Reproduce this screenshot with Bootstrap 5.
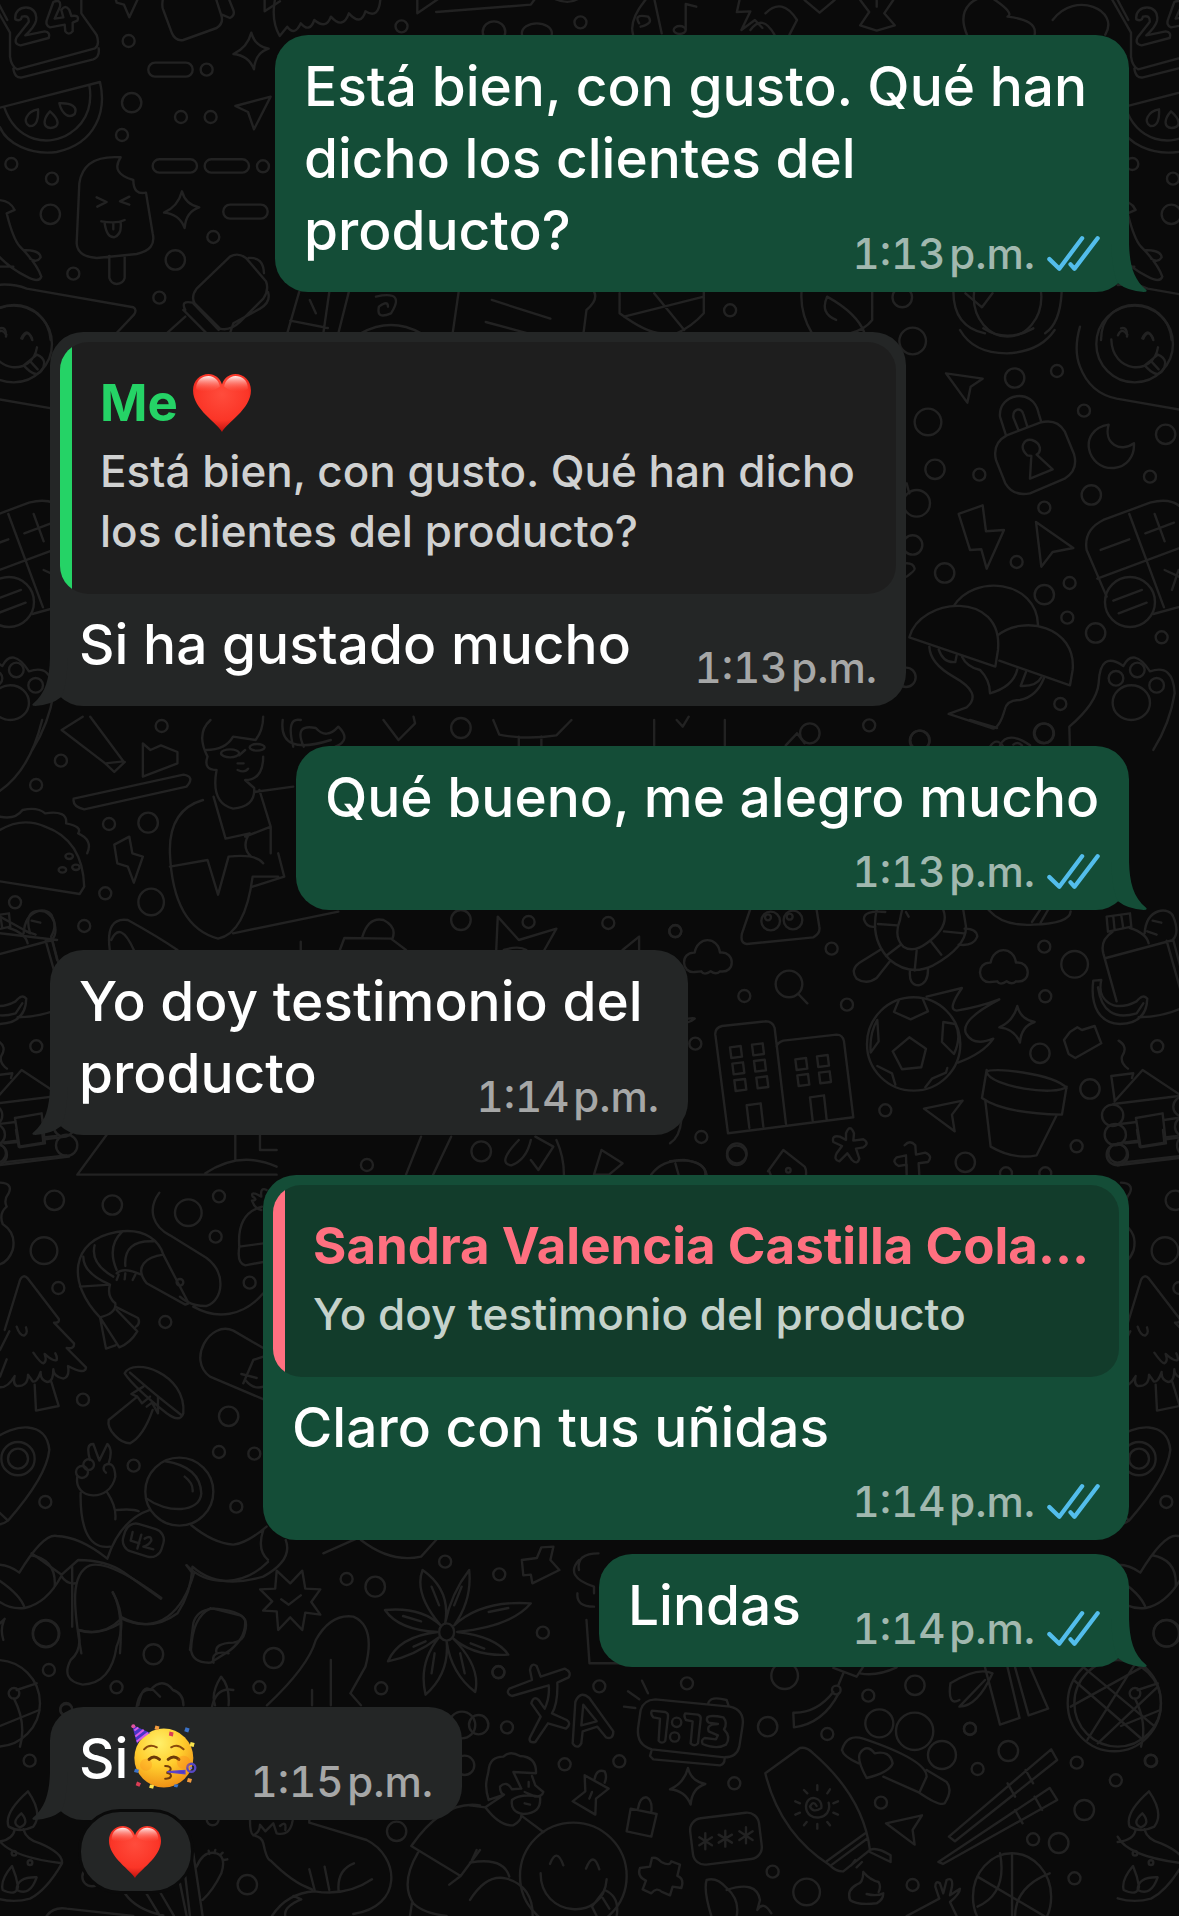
<!DOCTYPE html>
<html lang="es">
<head>
<meta charset="utf-8">
<meta name="viewport" content="width=device-width, initial-scale=1">
<title>Chat</title>
<link href="https://cdn.jsdelivr.net/npm/bootstrap@5.3.0/dist/css/bootstrap.min.css" rel="stylesheet">
<style>
  body { background: #0a0a0a; color: #fff; font-family: Inter, "Noto Sans", sans-serif; }
  .chat { min-height: 1916px; padding: 35px 50px 24px; gap: 40px; isolation: isolate; }
  .close-set { gap: 14px; }
  .wallpaper { z-index: -1; inset: 0; fill: none; stroke: #222; stroke-width: 2.4; stroke-linecap: round; stroke-linejoin: round; }
  .wallpaper * { vector-effect: non-scaling-stroke; }
  .wallpaper .cover { fill: #0a0a0a; }
  .bubble { --tone: #242626; --inset: #1e1e1e; --soft: #d0d1d1; --dim: #a6a7a7; background: var(--tone); border-radius: 33px; padding: 15px 29px 12px; max-width: 866px; }
  .bubble.sent { --tone: #144d37; --inset: #123c2b; --soft: #c5d2cb; --dim: #a1b8af; }
  .has-quote { padding-top: 10px; }
  .has-quote .quoted { margin: 0 -19px 14px; }
  .words { font-size: 55px; line-height: 72px; font-weight: 500; margin: 0 0 14px; }
  .stacked .words { margin-bottom: 13px; }
  .flowing .words { display: flow-root; margin: 0; }
  .flowing .stamp { margin-top: 34px; }
  .stamp { font-size: 42px; line-height: 52px; font-weight: 500; font-variant-numeric: tabular-nums; color: var(--dim); gap: 12px; white-space: nowrap; }
  .stamp svg { width: 53px; height: 35px; margin-bottom: 2px; fill: none; stroke: #53bdeb; stroke-width: 13; stroke-linecap: round; stroke-linejoin: round; }
  .size-a { width: 854px; }
  .size-b { width: 856px; }
  .size-c { width: 833px; }
  .size-d { width: 638px; }
  .size-e { width: 866px; }
  .size-f { width: 530px; }
  .size-g { width: 412px; }
  .quoted { background: linear-gradient(90deg, var(--bar) 12px, var(--inset) 12px); border-radius: 28px; padding: 31px 20px 33px 40px; }
  .quoted.mine { --bar: #25d366; }
  .quoted.theirs { --bar: #ff7080; }
  .who { color: var(--bar); font-size: 51px; line-height: 60px; font-weight: 700; margin-bottom: 8px; }
  .excerpt { color: var(--soft); font-size: 44px; line-height: 60px; font-weight: 500; margin: 0; }
  .tail { width: 36px; height: 48px; right: -18px; bottom: 0; fill: var(--tone); }
  .received > .tail { right: auto; left: -18px; transform: scaleX(-1); }
  .heart { width: 60px; height: 60px; }
  .who .heart { margin-left: 6px; }
  .party { width: 67px; height: 67px; margin: -4px 0 0 3px; }
  .reaction { left: 28px; top: 102px; width: 116px; height: 85px; background: #242626; border: 3px solid #0a0a0a; border-radius: 42px; padding: 0; }
  .reaction .heart { width: 54px; height: 54px; margin-right: 2px; }
</style>
<script src="https://cdn.jsdelivr.net/npm/bootstrap@5.3.0/dist/js/bootstrap.bundle.min.js"></script>
</head>
<body>
<svg width="0" height="0" class="position-absolute" aria-hidden="true">
  <defs>
    <radialGradient id="red" cx=".5" cy=".35" r=".7"><stop offset="0" stop-color="#ff4c3c"/><stop offset=".65" stop-color="#fb3527"/><stop offset="1" stop-color="#b30808"/></radialGradient>
    <linearGradient id="shine" x1="0" y1="0" x2="0" y2="1"><stop offset="0" stop-color="#fff" stop-opacity=".9"/><stop offset="1" stop-color="#ff6a5a" stop-opacity="0"/></linearGradient>
    <radialGradient id="yellow" cx=".42" cy=".25" r=".8"><stop offset="0" stop-color="#fff06a"/><stop offset=".5" stop-color="#ffcd2e"/><stop offset="1" stop-color="#ee8a12"/></radialGradient>
    <symbol id="heart" viewBox="0 0 58 58">
      <path d="M29 57C25 49 1 35 1 17C1 7 8 1 16 1C22 1 27 5 29 11C31 5 36 1 42 1C50 1 57 7 57 17C57 35 33 49 29 57Z" fill="url(#red)"/>
      <path d="M4 15C4 7 10 3 16 3C22 3 26 8 27 13C22 18 7 20 4 15ZM54 15C54 7 48 3 42 3C36 3 32 8 31 13C36 18 51 20 54 15Z" fill="url(#shine)"/>
    </symbol>
    <symbol id="party" viewBox="395 100 200 195">
      <circle cx="493" cy="202" r="88" fill="url(#yellow)"/>
      <path d="M398 103L453 127Q424 135 413 160Z" fill="#4a35c8"/>
      <path d="M405 120L417 111M408 138L433 118M412 153L446 127" stroke="#d65be8" stroke-width="6"/>
      <circle cx="402" cy="107" r="6" fill="#e052a0"/>
      <path d="M434 176Q450 158 472 170M515 170Q534 158 552 176" fill="none" stroke="#8a4a0c" stroke-width="6" stroke-linecap="round"/>
      <path d="M449 206Q463 192 480 206M506 206Q523 192 538 206" fill="none" stroke="#6b3908" stroke-width="9" stroke-linecap="round"/>
      <path d="M497 226Q516 226 513 237Q508 244 501 246Q516 248 514 257Q510 265 497 264" fill="none" stroke="#713c0c" stroke-width="6" stroke-linecap="round"/>
      <path d="M503 243L556 239L556 249Z" fill="#4a35c8" stroke="#5b44c9" stroke-width="4"/>
      <circle cx="575" cy="231" r="12" fill="none" stroke="#5747c4" stroke-width="7"/><circle cx="574" cy="232" r="4" fill="#8073de"/>
      <g stroke-width="0"><path d="M468 105l12 3-3 11-12-3zM565 262l12 3-3 11-12-3z" fill="#f29a3d"/><path d="M510 123l12 3-2 12-12-3zM413 272l12 5-5 11-11-5z" fill="#dc3d55"/><path d="M558 110l12 4-4 12-12-4zM407 234l12 3-3 10-12-3zM525 280l12 1-4 9-10-2z" fill="#3b72c8"/><path d="M573 154l12 3-3 12-12-3zM452 281l12 2-3 11-12-3z" fill="#f9e34d"/></g>
      <circle cx="440" cy="222" r="18" fill="#ff7a1a" opacity=".25"/><circle cx="552" cy="215" r="20" fill="#ff7a1a" opacity=".3"/>
    </symbol>
    <symbol id="ticks" viewBox="0 0 160 106"><path d="M7 70L37 99L106 7M71 86L83 99L153 7"/></symbol>
    <symbol id="tail" viewBox="0 0 108 144"><path d="M0 0H54C56 60 66 105 106 138Q110 144 98 144Q50 141 20 117Q5 90 0 0Z"/></symbol>
  </defs>
</svg>

<main class="chat position-relative d-flex flex-column overflow-hidden">
  <svg class="wallpaper position-absolute w-100 h-100" viewBox="0 0 1179 1916" preserveAspectRatio="xMidYMin slice" aria-hidden="true">
    <defs>
      <circle id="s" r="18"/><circle id="m" r="29"/><circle id="l" r="40"/>
      <ellipse id="es" rx="8" ry="18"/><ellipse id="em" rx="13" ry="30"/><ellipse id="el" rx="17" ry="40"/>
      <path id="star" d="M0-56Q10-16 52-8Q12 4 8 54Q-8 12-54 8Q-12-10 0-56Z"/>
      <path id="cloud" d="M-40 40C-80 45-85-20-40-18C-32-68 30-68 36-18C82-24 84 46 36 38Q24 50 8 38Q-12 52-20 38Z"/>
      <!-- everything that touches the seam of the repeating pattern -->
      <g id="seam">
        <g transform="scale(.3333)">
          <path d="M-60-60L30 98V170Q34 200 52 208L285 145Q300 135 290 105L244 40V-20M-10 0L22 60M40 206Q44 236 66 232L280 178Q300 170 296 145"/>
          <path d="M46 58C40 10 118 10 108 62Q104 80 76 106L134 94Q152 96 146 114L62 136Q40 132 50 112L86 66Q88 44 66 50Q62 66 46 58ZM160 6Q184-4 180 20L164 56L190 52L184 30Q196 12 208 30L214 48Q240 44 232 62L218 68L218 94Q206 108 196 94L194 74L150 82Q134 76 142 56Z"/>
          <path d="M-20 328L300 246C320 330 290 430 170 456C90 466 20 430 0 382M12 320C50 430 150 440 210 400C270 360 276 300 268 256M114 328C80 334 66 366 88 378C110 380 116 356 114 328ZM150 334C130 356 126 382 152 384C180 382 180 360 150 334ZM178 310C186 344 208 356 224 342C234 320 214 308 178 310Z"/>
          <use href="#s" x="34" y="492"/><use href="#s" x="156" y="536"/><use href="#m" x="151" y="643"/>
          <path d="M-10 600Q30 600 44 630L20 640Q40 720 60 740Q110 790 124 830Q118 850 80 830Q20 800-20 750M70 750Q120 750 122 772Q110 790 90 776M0 800H40M-10 855Q40 850 80 866L400 922Q412 930 402 944L330 1020M-60 1020C-60 880 140 880 152 1020M0 985Q20 980 18 1010M64 1015Q80 980 96 1015"/>
        </g>
        <g transform="translate(-231 330) scale(.3333)">
          <path d="M570-10Q550 60 570 110Q600 190 680 206L900 244M664 28C666 130 790 140 804 52M684 16Q694-10 712 14M760 26Q776-8 790 30M764 106L804 74Q840 90 816 124Q800 146 764 106ZM784 94L806 118"/><circle cx="734" cy="42" r="115"/>
        </g>
        <g transform="translate(0 1130) scale(.3333)">
          <path d="M-20 100L200 76M-10 40L50 32M130 22L170 18M48 0L56 50L130 38L126 0"/><circle cx="200" cy="46" r="32"/><circle cx="-10" cy="70" r="28"/>
          <path d="M0 158Q40 160 26 190Q10 210 20 230Q-4 250 8 282Q50 310 38 360Q24 400-10 405"/>
          <use href="#m" x="163" y="211"/><use href="#l" x="132" y="362"/><use href="#s" x="175" y="474"/>
          <path d="M14 600L60 450Q70 430 84 446L176 566Q180 580 162 578L222 640Q224 658 200 654L258 712Q256 736 204 708Q210 740 190 746Q160 740 160 718Q160 756 142 756Q120 750 122 726Q110 760 98 754L84 734Q84 770 50 768Q38 760 44 738Q20 780-10 770M28 604L0 660M20 688L0 740M104 764L108 842L176 828L154 756M50 590Q60 620 74 616Q84 610 78 592M100 668Q122 700 130 700Q142 694 134 672Q160 696 170 690Q172 680 166 670M-20 930C40 880 140 870 148 960Q140 1040 24 1172Q0 1190-20 1180M24 1172L-10 1140"/>
          <circle cx="54" cy="986" r="50"/><circle cx="54" cy="986" r="30"/><use href="#s" x="136" y="1116"/>
          <path d="M-20 1305Q20 1300 58 1328Q130 1210 170 1218Q240 1220 322 1286Q360 1170 450 1140M94 1276Q170 1290 164 1370M-20 1340Q60 1390 74 1434Q20 1440-20 1400M74 1434Q140 1420 184 1338Q200 1364 226 1360M0 1480Q20 1460 12 1470Q0 1500 10 1530"/><use href="#l" x="138" y="1510"/>
        </g>
        <g transform="translate(0 1690) scale(.3333)">
          <circle cx="-10" cy="40" r="130"/><circle cx="42" cy="10" r="16"/><path d="M42 26Q80 100 60 170M0 108L118 60M50 0L110-20"/><use href="#s" x="89" y="212"/>
          <path d="M84 304Q10 370 26 410Q60 430 100 410Q130 370 84 304ZM64 370Q30 400 60 412Q90 400 64 370ZM44 418Q40 450-10 456M70 418Q80 450 120 460Q190 490 186 520Q140 600 90 626Q40 640-10 625M-10 440Q20 500 186 520M36 528Q0 570 8 600Q50 620 54 590Q50 560 36 528ZM110 562Q50 560 50 600Q90 620 110 562Z"/><circle cx="42" cy="490" r="7"/><circle cx="90" cy="518" r="7"/>
        </g>
      </g>
      <g id="seamright">
        <g transform="translate(670 900) scale(.3333)">
          <path d="M1310 50L1380 40L1384 80L1314 95ZM1330 50L1334 90M1354 46L1360 85M1328 95Q1290 120 1300 160L1340 304M1380 84Q1430 100 1436 130M1308 174L1510 120L1560 310Q1500 350 1406 352M1490 122L1540 300M1424 100C1430 20 1500 20 1510 50Q1530 100 1508 120M1448 62L1474 68M1432 94L1460 104M1270 242L1294 240C1280 300 1330 340 1400 304Q1420 280 1432 296Q1430 370 1350 372C1290 370 1260 320 1270 242M1284 262Q1300 370 1400 340L1420 310"/>
          <path d="M1346 422Q1376 440 1356 470Q1352 490 1374 506M1334 600L1324 528L1390 520L1386 534M1334 604L1418 510L1560 604M1330 612L1560 584M1398 654L1478 640L1488 730L1412 742ZM1350 672L1400 666M1482 660L1550 650M1366 730L1406 726M1488 718L1550 710M1344 796L1560 770"/><circle cx="1328" cy="646" r="32"/><circle cx="1336" cy="704" r="32"/><circle cx="1342" cy="764" r="32"/><circle cx="1540" cy="620" r="30"/><circle cx="1545" cy="680" r="30"/><use href="#s" x="1462" y="439"/>
        </g>
        <g transform="translate(890 330) scale(.3333)">
          <path d="M650 800L590 660Q580 600 640 570L780 518Q850 500 880 540L980 800L790 852M718 552L822 832M622 746L880 650M632 660L718 628M766 610L852 578M794 552L824 634M824 720L880 746M866 720L846 780M670 812L756 780M686 850L770 818"/><circle cx="720" cy="816" r="75"/>
          <path d="M540 1260L538 1190Q620 1120 626 1060Q630 960 700 1008Q730 950 780 1024Q850 1000 854 1090Q840 1180 790 1260"/><circle cx="678" cy="1045" r="22"/><circle cx="742" cy="1020" r="22"/><circle cx="800" cy="1066" r="22"/><ellipse cx="724" cy="1118" rx="56" ry="52"/>
        </g>
      </g>
    </defs>
    <use href="#seam"/><use href="#seam" x="1121"/><use href="#seamright"/><use href="#seamright" x="-1121"/>

    <!-- top left -->
    <g transform="scale(.3333)">
      <use href="#s" x="386" y="123"/><use href="#m" x="395" y="308"/><use href="#s" x="366" y="405"/><use href="#s" x="620" y="209"/><use href="#s" x="543" y="351"/><use href="#s" x="632" y="351"/><use href="#s" x="789" y="499"/><use href="#s" x="640" y="711"/><use href="#m" x="526" y="780"/><use href="#s" x="220" y="821"/><use href="#s" x="478" y="893"/>
      <use href="#star" x="754" y="154"/><use href="#star" x="546" y="630"/>
      <rect x="445" y="188" width="133" height="42" rx="20"/><rect x="458" y="478" width="133" height="40" rx="20"/><rect x="614" y="478" width="133" height="40" rx="20"/><rect x="670" y="614" width="133" height="42" rx="20"/>
      <path d="M345-10L350 8L372 14L388 52L412 0M490-10Q484 20 490 30L516 100Q526 124 550 120L650 84Q672 70 664 46L646-10M666 44L690 54Q706 46 700 30L684-10M794-10V34L840 4M706 318L812 290L762 388L744 336Z"/>
      <path d="M362 472Q250 464 238 550L230 730Q232 770 290 774L410 762Q470 750 458 700L438 578Q400 586 400 540Q330 520 362 472ZM328 768V834Q334 852 350 852Q370 850 374 834V768M290 592L320 606L292 620M388 590L360 604L388 614M304 664Q350 672 374 660M314 670Q320 712 342 712Q366 704 362 668M340 670V688"/>
      <path d="M690 770Q714 756 738 774L798 844Q808 870 790 896L720 966Q690 994 660 986L584 910Q572 890 590 866ZM746 774Q790 770 792 820M804 876Q814 906 780 926L700 970L690 1000M556 930Q540 900 578 908L656 990M550 930L620 1000M556 950L500 1000"/>
    </g>
    <!-- top strip and the strip below the first message -->
    <g transform="scale(.7519 .3333)">
      <path d="M366-5Q360 60 372 108L382 80Q392 110 400 70Q412 100 418 60Q434 90 440 50Q456 90 464 40Q480 80 486 34Q504 60 506-5M555-5V40L584-5M580 36L706 14L712-5M736-5Q756 16 770-5M860-5Q836 60 842 104M862 50Q870 70 852 80M862 50Q842 40 850 70M870-5L880 100M912 88V12L926 20M984-5L980 36L998 34L986 90L1004 60L1014 84M1018 40Q1040-10 1060 60L1050 104M998 90Q1014 40 1030 104M1070 0L1090 38L1110 0M1144 0L1156 36L1144 76L1166 92L1190 76L1176 40L1188 0M1166 20V0"/>
      <ellipse cx="904" cy="90" rx="8" ry="12"/><ellipse cx="657" cy="96" rx="15" ry="32"/><ellipse cx="714" cy="100" rx="20" ry="30"/><use href="#es" x="534" y="79"/><use href="#es" x="772" y="67"/>
      <path d="M1286 104C1270 20 1300-20 1320-5Q1350 40 1340 50Q1380 60 1376 104M1400 60C1430-30 1490 30 1470 104"/>
      <path d="M398 875L382 1000M438 875L430 1000M412 900L420 940M386 962L436 984M464 875L450 1000M500 890Q540 870 520 940Q500 960 504 920Q516 900 516 920M480 1000Q520 950 560 1000M610 875L602 1000M654 900L732 956M646 966L702 1000M790 875Q796 900 780 930L776 1000M824 880V940Q860 1000 880 1000M936 875V940Q920 980 900 1000M830 950L936 890M870 880L910 990M1066 875Q1064 940 1080 1000M1160 875V960Q1150 990 1130 1000M1100 890Q1090 940 1112 960M1100 890Q1140 940 1150 1000M1268 875Q1268 980 1310 1000M1412 875Q1410 970 1390 1000M1284 880L1306 922L1320 880"/><use href="#es" x="971" y="931"/><use href="#em" x="1200" y="892"/><ellipse cx="1340" cy="890" rx="45" ry="120"/>
    </g>
    <!-- right of the second message -->
    <g transform="translate(890 330) scale(.3333)">
      <use href="#l" x="68" y="33"/><use href="#m" x="374" y="144"/><use href="#s" x="501" y="123"/><use href="#l" x="114" y="276"/><use href="#s" x="582" y="242"/><use href="#m" x="827" y="313"/><use href="#m" x="135" y="418"/><use href="#s" x="268" y="434"/><use href="#s" x="780" y="440"/><use href="#m" x="604" y="495"/><use href="#s" x="463" y="533"/><use href="#l" x="80" y="520"/><use href="#m" x="68" y="645"/><use href="#s" x="380" y="696"/><use href="#m" x="164" y="729"/><use href="#s" x="539" y="759"/><use href="#m" x="463" y="794"/><use href="#s" x="532" y="863"/><use href="#m" x="617" y="909"/><use href="#s" x="815" y="922"/><use href="#m" x="48" y="1042"/><use href="#s" x="511" y="1122"/><use href="#m" x="463" y="1210"/><use href="#m" x="90" y="1231"/>
      <path d="M210 0Q250 70 350 70Q450 66 494 0M280-5Q350 40 430-5M168 130L278 146L242 170L232 218Z"/>
      <path d="M348 316L330 260C324 190 430 170 446 250L454 276M386 302L370 262C368 236 394 230 400 252L412 290M350 316L450 278Q500 264 524 304L552 372Q566 420 524 446L420 490Q370 500 346 460L318 390Q306 340 350 316ZM412 376C384 350 404 326 426 330C456 340 454 366 440 374L488 418L420 446L424 378ZM656 284C560 300 590 420 672 414C710 410 734 380 732 340C690 370 640 340 656 284Z"/>
      <path d="M206 552L278 526L288 604L342 600L290 716L274 658L240 660ZM438 576L550 654L488 666L454 710Z"/>
      <path d="M190 830C250 730 440 750 444 884M318 920C400 850 560 890 548 1020L540 1066L328 992"/><path class="cover" d="M58 922C90 800 340 780 324 960L316 1010Z"/>
      <path d="M118 950Q120 1000 190 1040Q280 1090 230 1132L176 1152L310 1196Q330 1190 344 1140Q350 1110 390 1110Q440 1100 462 1044M146 958Q160 1000 196 996L200 976M216 980Q230 1010 270 1020Q300 1050 300 1090Q370 1070 382 1018M408 1026L392 1068Q440 1070 454 1042M300 1250Q320 1220 340 1250M370 1244Q384 1234 396 1246M50 740Q76 720 74 716Q70 700 50 700M50 460L58 490"/>
    </g>
    <!-- around the third message -->
    <g transform="translate(0 720) scale(.7519 .3333)">
      <path d="M56 0Q40 150 0 212M82 30L110-10M82 30L140 130L164 124L120-10M140 130L152 156L166 126M190 70L200 90L214 76L236 96V130L190 170ZM98 236L244 164Q260 170 248 200L112 268Q96 260 98 236M280 0Q260 40 276 110Q270 150 288 150Q280 250 310 266Q340 260 338 204L326 180Q350 180 350 110M274 90Q300 90 310 50L340 60Q350 30 350-10M318 106L326 90M324 130H316M316 150Q326 160 330 146M270 240Q224 270 226 400Q230 620 290 656Q326 640 336 470L370 470M284 230L300 356L332 340Q320 380 334 410M226 440L276 420L290 524L304 410Q340 400 350 430M338 216L390 200M345 210L360 320L326 350M360 320V400M336 500L378 470L370 400M376 0Q370 110 440 60M390 80Q380-10 400 0M404 80Q390 10 420 24Q434 60 450 20Q468 60 446 80M310 640L450 575"/>
      <circle cx="306" cy="100" r="12"/><circle cx="342" cy="82" r="10"/><path d="M0 330Q30 290 60 320Q110 360 112 500L106 522L0 484M0 290Q20 300 30 270Q50 260 60 280Q90 270 88 310Q110 320 104 340Q124 360 116 400M152 374L172 350L176 400L190 410L178 488L170 440L156 430Z"/><ellipse cx="92" cy="409" rx="5" ry="8"/><ellipse cx="83" cy="450" rx="5" ry="8"/><ellipse cx="101" cy="442" rx="5" ry="8"/>
      <use href="#es" x="48" y="195"/><use href="#es" x="81" y="122"/><use href="#es" x="145" y="312"/><use href="#em" x="197" y="308"/><use href="#es" x="140" y="520"/><use href="#el" x="201" y="546"/><use href="#es" x="112" y="618"/><use href="#es" x="703" y="606"/><use href="#es" x="809" y="609"/><use href="#es" x="898" y="634"/><use href="#em" x="613" y="600"/><use href="#es" x="20" y="547"/>
      <path d="M510 0L530 60L552 10L550-10M656 0L664 44Q700 60 740 46L760 0M690 50V80M720 50V80M870 0V76M964 0V76M900 0L908 20L916-10M1060 40L1045 76M1060 40L1070 70M1290 0L1326 24M1330 76Q1340 30 1370 76M146 690Q140 590 170 600Q210 650 236 690M148 660Q160 600 178 690M452 690L458 654L520 656L540 690M482 650Q490 590 510 600Q528 620 522 656M660 690L662 590L690 660L740 626L724 690M670 690Q690 676 700 690M828 690L850 650V690M0 590L40 640Q30 560 60 575Q80 600 68 650L76 720M0 640L76 660M400 690V665"/><use href="#em" x="613" y="24"/><use href="#em" x="1077" y="40"/><use href="#em" x="1388" y="40"/><use href="#em" x="1223" y="62"/><use href="#es" x="1156" y="16"/><use href="#es" x="215" y="18"/>
    </g>
    <!-- right of the fourth message -->
    <g transform="translate(670 900) scale(.3333)">
      <use href="#s" x="16" y="93"/><use href="#s" x="485" y="146"/><use href="#s" x="223" y="288"/><use href="#s" x="531" y="314"/><use href="#s" x="76" y="431"/><use href="#s" x="1123" y="140"/><use href="#l" x="1214" y="193"/><use href="#s" x="1126" y="289"/><use href="#m" x="1110" y="460"/><use href="#m" x="1260" y="567"/><use href="#s" x="646" y="631"/><use href="#s" x="94" y="711"/><use href="#m" x="200" y="766"/><use href="#m" x="886" y="787"/><use href="#s" x="1220" y="739"/><use href="#s" x="1008" y="820"/><use href="#s" x="1126" y="820"/>
      <use href="#cloud" x="114" y="176"/><use href="#cloud" x="1002" y="206"/><use href="#star" x="1042" y="374"/>
      <circle cx="357" cy="252" r="40"/><path d="M385 282L412 310M240 30L216 100Q210 130 230 132L430 112Q452 100 448 80L440 30"/><circle cx="302" cy="63" r="28"/><circle cx="369" cy="60" r="28"/><circle cx="294" cy="52" r="9"/><circle cx="359" cy="50" r="9"/>
      <path d="M620 30Q600 120 660 180Q720 230 790 196Q890 140 888 80L880 30M690 60Q700 0 720-10M690 60Q670 110 700 140Q730 160 770 130Q840 80 820 30M624 72L682 76M708 36L716 50M822 94L882 100M784 126L814 164M740 152L734 212M690 136L648 168M646 36Q580 30 582 58Q590 84 616 80M884 86Q920 86 922 110Q910 140 866 134M630 150L566 190Q540 210 560 236Q590 256 620 234L658 186M720 212Q716 256 746 256Q776 250 774 204M956 30Q1000 80 1090 74Q1200 70 1202 34M1110 30L1086 66M1134 30L1112 68"/>
      <path d="M174 700L136 404Q134 384 156 378L286 364Q308 364 314 384L348 672M320 440Q322 428 340 422L500 404Q518 404 522 424L550 652L174 700M238 684L230 616L272 610L280 680M428 662L420 592L462 586L470 658"/>
      <path d="M180 442l32-4 4 32-32 4zM246 434l32-4 4 32-32 4zM187 491l32-4 4 32-32 4zM252 483l32-4 4 32-32 4zM193 541l32-4 4 32-32 4zM259 533l32-4 4 32-32 4zM376 478l32-4 4 32-32 4zM441 469l32-4 4 32-32 4zM382 526l32-4 4 32-32 4zM447 518l32-4 4 32-32 4z"/>
      <circle cx="731" cy="432" r="140"/><path d="M718 412L768 446L754 502L696 508L668 454ZM686 302L672 336L722 358L774 334L758 296M622 360Q598 400 602 458L626 424ZM820 366L856 372Q876 410 852 462L816 426ZM622 498L666 520L676 554M766 562L786 536L828 518L832 504M770 290L876 264Q830 330 860 332Q930 320 988 298Q870 360 888 400Q910 440 970 416Q940 460 864 488"/>
      <path d="M950 510L936 594Q1000 640 1176 644L1190 560C1160 590 960 560 950 516C960 500 1150 520 1190 564M946 602L962 740Q1030 780 1100 766L1160 646M762 626L878 602L846 644L854 694ZM1182 420L1200 396L1222 382L1236 390L1274 378L1294 430L1216 474L1196 462Z"/>
      <path d="M528 700Q540 670 552 700L550 722L580 718Q600 730 580 742L558 746L568 776Q562 796 546 780L532 760L508 784Q490 780 500 760L516 738L490 726Q484 704 510 710L528 720ZM704 736Q720 718 736 736L738 764L766 758Q790 768 774 786L746 790L748 825M710 825V794L686 798Q664 786 680 772L708 766ZM294 814L340 750L404 800Q410 810 408 825M298 814L302 825M0 784Q100 770 110 825M16 790L26 825"/><circle cx="355" cy="811" r="7"/><path d="M54 356Q94 350 56 366M34 660Q30 710 0 730"/>
    </g>
    <!-- strip above the fifth message -->
    <g transform="translate(0 1140) scale(.7519 .3333)">
      <path d="M540 104L560-10M576 104L600-10M690 0Q660 70 680 76Q700 60 706 0M706 60L716 90L736 20L712-10M740 0Q750 50 750 104M790 104L800 30L828 70L810 104ZM866 104Q880 60 910 60Q940 70 938 104"/><use href="#es" x="488" y="75"/><use href="#em" x="640" y="34"/><use href="#em" x="980" y="40"/>
    </g>
    <!-- left of the fifth message -->
    <g transform="translate(0 1130) scale(.3333)">
      <path d="M320 14L232 134H830M706 14V90M780 14V60H830M616 130Q720 60 830 110M478 188C440 240 460 290 510 316L620 384C680 430 670 510 620 528C570 530 540 500 540 500M580 530C650 570 730 560 790 490M800 180Q780 170 784 200Q750 180 758 200Q776 210 756 212Q764 236 784 240M786 230Q710 250 718 350L790 340M718 350Q710 400 736 406L790 396"/>
      <path d="M300 562C200 460 210 330 350 306C440 290 480 340 490 374L566 520L556 524L440 460C400 410 440 380 490 374M300 562Q350 550 346 520Q320 500 330 464L240 470M330 464Q250 430 250 380M340 440Q270 400 284 346M350 420Q320 350 366 306M376 408Q370 330 460 334M350 430Q370 410 424 434M350 450L356 434M374 448L376 430M398 450L406 434M346 530L414 564Q422 580 408 590M350 540L412 604Q390 640 358 652L300 562L318 656L346 646M300 562L358 652"/><circle cx="540" cy="457" r="10"/>
      <use href="#m" x="337" y="225"/><use href="#l" x="565" y="248"/><use href="#s" x="657" y="199"/><use href="#s" x="647" y="320"/><use href="#s" x="749" y="458"/><use href="#s" x="496" y="576"/><use href="#s" x="249" y="809"/><use href="#m" x="686" y="859"/><use href="#s" x="657" y="966"/><use href="#s" x="763" y="971"/><use href="#s" x="401" y="1007"/><use href="#s" x="709" y="1130"/>
      <path d="M800 660L700 602C630 570 560 690 630 740L800 812M724 732L770 744M730 760L760 690L790 680M736 750Q760 780 790 770"/>
      <path d="M374 730C400 680 560 730 550 850Q540 880 500 850Q400 770 374 730ZM390 728Q460 790 545 856M430 770L394 792L412 800L326 870C320 900 360 940 390 940Q430 920 458 840M412 800L426 820L450 800M440 830L456 818L474 850V800"/>
      <circle cx="538" cy="1085" r="102"/><path d="M440 1106C500 1150 600 1150 604 1090Q600 1010 496 994M554 1040Q580 1060 578 1084M232 1040C220 1110 330 1120 346 1040Q344 990 314 1006Q306 1020 318 1028M270 990Q256 940 280 942L298 992L322 942Q340 960 326 1000M242 1088C240 1180 260 1260 330 1250M322 1088Q350 1130 346 1168M350 1140Q400 1136 416 1144M574 1186Q640 1240 700 1244Q740 1240 800 1190M560 1306C620 1370 730 1370 804 1296M790 1200Q770 1260 804 1290M582 1330C550 1440 480 1520 360 1464M484 1404Q330 1290 270 1306C210 1330 220 1430 244 1570M338 1388Q370 1440 360 1570M236 1500Q310 1520 360 1470"/>
      <circle cx="246" cy="1026" r="18"/><circle cx="266" cy="1004" r="16"/>
      <rect x="370" y="1188" width="120" height="86" rx="34" transform="rotate(17 430 1231)"/><path d="M398 1206L392 1232L418 1240M424 1214L412 1256M434 1226Q454 1214 454 1232Q446 1246 430 1250L460 1258"/>
      <path d="M650 1570Q640 1540 700 1538Q720 1536 730 1520Q750 1470 720 1456L640 1436Q590 1440 580 1480L570 1560"/>
    </g>
    <!-- bottom half, between the last messages -->
    <g transform="translate(0 1540) scale(.7519 .3333)">
      <path d="M42 40L82 104L104 60Q140 60 164 96L214 176M150 156Q170 240 155 320Q148 430 110 434Q80 420 94 360Q110 330 104 270Q130 290 160 250M96 80V260M160 230Q200 280 236 220Q254 160 256 80Q290 150 350 110Q390 60 380 0M248 76L256 100M355 496Q410 380 420 300Q440 220 470 230Q500 260 486 380L466 460M440 360L440 496M466 460L480 496M415 450V496"/>
      <path d="M346 148L366 146L368 92L386 130L402 92L406 146L426 148L414 186L426 224L406 218L402 270L386 232L370 270L368 214L350 212L362 184ZM374 178L384 194L400 166M280 205Q320 210 326 240Q328 300 300 340L280 368Q256 370 254 330Q256 230 280 205M284 368Q280 330 304 340"/>
      <path d="M586 256Q550 160 562 90Q600 150 592 250Q600 160 624 90Q628 180 604 256Q640 180 706 190Q680 260 608 276Q660 290 676 344Q630 350 602 294Q640 380 632 456Q600 400 594 304Q598 400 566 464Q556 370 584 292Q550 350 516 364Q530 290 582 276Q530 270 512 210Q560 200 586 256ZM574 140L584 196M614 140L604 196M650 216L676 204M536 228L560 244M550 320L566 304M626 310L644 326M578 340L574 400M612 340L618 400"/><ellipse cx="594" cy="276" rx="10" ry="26"/>
      <path d="M694 60L714 54L720 22L736 20L732 60L744 90L708 130L706 104L696 106ZM430 40Q470 0 480-10M480 0Q520 70 560 50L580 0M770 60Q750 110 790 140V160M796 40Q766 40 770 90M768 160Q766 200 790 200M780 240L784 370H830M184 496Q190 430 200 450Q216 410 230 450Q244 460 244 496M286 496Q280 460 294 410Q306 440 304 496"/>
      <use href="#es" x="592" y="65"/><use href="#es" x="664" y="103"/><use href="#es" x="461" y="117"/><use href="#em" x="499" y="140"/><use href="#es" x="722" y="278"/><use href="#em" x="204" y="343"/><use href="#em" x="364" y="354"/><use href="#es" x="65" y="390"/><use href="#es" x="155" y="442"/><use href="#es" x="345" y="442"/><use href="#es" x="507" y="445"/><use href="#es" x="663" y="397"/><use href="#el" x="61" y="282"/><use href="#es" x="88" y="507"/>
      <path d="M1276 480Q1260 500 1264 430Q1300 380 1320 400Q1300 500 1276 500L1310 420M1310 382L1330 554L1356 534L1340 382M1350 382L1368 526L1394 506L1370 382"/><ellipse cx="1482" cy="490" rx="62" ry="144"/><path d="M1428 420L1520 600M1510 370L1446 600M1440 380L1536 560M1424 500L1520 380M1460 610L1540 440"/>
      <path d="M1262 890L1398 628L1406 660L1270 904ZM1248 966L1396 744L1406 780L1254 972ZM1340 730L1350 770M1364 690L1374 730M1350 810L1360 850M1376 770L1386 810"/><ellipse cx="1346" cy="1070" rx="52" ry="130"/><path d="M1300 1010L1390 1130M1346 940V1130M1396 1000Q1350 1040 1350 1130M1300 1100Q1340 1060 1330 940"/>
      <use href="#el" x="1551" y="280"/><use href="#es" x="1432" y="668"/><use href="#es" x="1484" y="721"/><use href="#em" x="1442" y="810"/><use href="#es" x="1374" y="898"/><use href="#em" x="1408" y="909"/><use href="#es" x="1429" y="1015"/><use href="#es" x="1531" y="663"/><use href="#em" x="1341" y="633"/><use href="#es" x="1290" y="567"/>
    </g>
    <!-- bottom left -->
    <g transform="translate(0 1690) scale(.3333)">
      <use href="#l" x="1386" y="105"/><use href="#m" x="1394" y="226"/><use href="#s" x="638" y="388"/><use href="#m" x="1190" y="424"/><use href="#m" x="742" y="584"/><use href="#m" x="276" y="560"/><use href="#s" x="199" y="60"/>
      <path d="M750 390Q750 430 760 436Q780 426 780 404L796 424L820 400L830 430Q870 440 878 392M840 408Q860 390 856 420M760 436Q786 440 790 460Q800 510 812 512Q880 580 936 598L900 582M928 388V398L1100 450C1200 500 1210 650 1060 672M928 538L944 600M974 530L988 600M1062 520Q1010 540 1016 604M1116 568Q1040 620 944 604Q860 610 816 678M880 618L904 628Q850 650 856 678M1440 346Q1330 330 1234 468L1382 558L1440 480M1382 558L1348 584M1254 488Q1200 580 1240 640Q1270 670 1340 678M1236 640L1230 678M590 530Q610 480 650 490Q680 500 664 550Q640 600 608 630M580 490L608 678M556 560L570 678M540 580L560 678M376 612Q410 660 490 676M440 612L480 678M480 606L522 678M140 678Q160 650 200 656L400 678M628 492L626 482M644 488L646 480M660 496L668 488M672 510L682 508M410 50Q420-10 460 0L480 20M636 50Q650-10 700 0"/>
    </g>
    <!-- bottom centre and right -->
    <g transform="translate(470 1660) scale(.3333)">
      <use href="#s" x="85" y="36"/><use href="#s" x="388" y="79"/><use href="#s" x="111" y="202"/><use href="#s" x="651" y="70"/><use href="#l" x="944" y="47"/><use href="#m" x="893" y="200"/><use href="#s" x="1072" y="222"/><use href="#s" x="1195" y="107"/><use href="#m" x="1335" y="76"/><use href="#s" x="1500" y="206"/><use href="#s" x="1523" y="327"/><use href="#s" x="284" y="313"/><use href="#s" x="448" y="304"/><use href="#s" x="793" y="370"/><use href="#s" x="1233" y="428"/><use href="#s" x="908" y="635"/><use href="#l" x="1010" y="696"/><use href="#s" x="1328" y="675"/><use href="#star" x="654" y="380"/><use href="#m" x="26" y="194"/>
      <path d="M180 30Q184 6 200 18L212 50L284 26Q306 36 296 52L262 68Q264 130 246 160L290 180Q306 190 288 206L234 190L196 246Q174 250 180 232L212 170L184 130Q190 106 206 120L224 146Q240 110 236 76L126 108Q106 100 118 86L186 60ZM308 250L316 126Q330 90 358 114L430 214Q430 240 408 232L382 200L338 214L334 250Q322 270 308 250ZM340 134L380 184L334 196Z"/>
      <path d="M556 118L780 140Q824 150 818 196L808 260Q800 292 764 292L546 268Q500 256 504 206L512 150Q520 120 556 118ZM714 132Q720 106 770 120L776 138M544 274L540 288L550 298L750 316Q764 312 764 296M516 62L534 100M474 94L508 118M462 140L496 144"/>
      <path d="M546 152L586 156Q596 160 594 170L586 242Q576 254 566 242L570 176L550 172Q540 162 546 152ZM646 160L684 164Q694 168 692 178L684 250Q674 262 662 250L668 184L648 180Q640 168 646 160ZM712 172Q720 164 760 172Q774 190 762 208Q784 230 768 254Q740 270 698 252Q692 240 704 234L738 238L744 226L716 214Q710 200 726 194L744 192L716 188Q708 182 712 172Z"/><circle cx="620" cy="187" r="14"/><circle cx="614" cy="231" r="14"/>
      <path d="M56 420C40 370 54 350 56 330Q60 290 100 290Q120 270 150 288Q200 290 198 340L130 336L154 386L126 388Q110 360 90 380Q90 400 102 404L46 442Q90 500 130 496Q156 480 154 464M0 436L46 442M186 348L196 376L220 396Q216 410 196 410L164 396M102 404L56 420M126 420Q150 400 210 410Q216 460 160 462Q120 456 126 420M164 430L180 434M176 366V380M158 470L220 516"/>
      <path d="M308 424L346 394L344 346L416 386L378 416L376 464ZM374 356Q380 326 404 334Q412 350 404 368M366 396L358 416M482 446L560 462L544 530L470 514ZM504 446Q510 410 530 412Q548 420 544 456"/>
      <circle cx="310" cy="648" r="160"/><path d="M240 612Q260 560 280 616M348 626Q370 570 388 628M212 640C210 770 400 790 410 658M366 740L404 690Q450 710 440 768M366 740L380 768M398 714L418 746M0 608Q100 590 118 650M0 720Q50 640 110 656Q190 680 188 770M6 600L20 570"/>
      <rect x="664" y="466" width="208" height="140" rx="36" transform="rotate(-7 768 536)"/><path d="M706 520V568M688 532L726 556M726 532L688 556M766 512V560M746 524L786 548M786 524L746 548M828 502V550M808 514L848 540M848 514L808 540"/>
      <path d="M510 624L540 620L546 594Q560 590 574 606Q600 620 604 604L630 614L622 648Q644 656 634 684L608 680L600 706L576 696Q560 680 544 700L518 688L528 662Q500 650 510 624ZM724 768Q700 690 710 660Q740 650 770 684Q810 720 800 768M770 690Q860 660 870 720L862 750Q880 720 904 760"/>
      <path d="M886 340L990 264Q1010 260 1030 280Q1180 410 1200 570L1120 634Q1100 636 1080 616Q930 520 886 340ZM1070 604L1186 520M1086 614L1194 534M1144 616L1156 600M1160 622L1176 606M1200 570Q1220 560 1262 586V606L1200 576M1040 438Q1030 420 1020 440Q1030 460 1054 444C1060 410 1010 400 1008 440C1010 490 1090 480 1076 428M1042 376V390M1080 388L1072 400M1104 424L1090 430M1104 464L1090 458M1080 496L1072 486M1042 506V492M1002 496L1010 486M976 464L990 458M976 424L990 430M1002 390L1012 400"/>
      <path d="M1180 636Q1180 670 1160 674Q1130 690 1140 720Q1160 736 1220 730Q1240 720 1240 700Q1220 710 1190 702M1180 636Q1200 660 1226 666Q1234 680 1226 696M1248 490L1356 466L1328 510L1334 554Z"/>
      <path d="M1116 270Q1130 220 1180 236Q1370 300 1370 350L1348 398L1240 350M1116 270Q1120 290 1166 310M1370 330L1430 366Q1450 390 1424 430Q1410 440 1348 398M1190 354Q1160 300 1170 280Q1190 250 1214 280Q1260 270 1268 310Q1260 336 1190 354Z"/><circle cx="1228" cy="190" r="42"/><circle cx="1334" cy="214" r="56"/><circle cx="1416" cy="285" r="42"/>
      <path d="M970 158Q1040 160 1090 96M972 202Q1060 190 1106 100M970 158L972 202M1120 40L1104 78M1090 24L1160 50L1180 20M1170 40Q1220 50 1280 22"/><circle cx="1099" cy="90" r="13"/>
      <path d="M1310 768L1408 716L1396 680Q1396 660 1410 670L1420 700L1430 660Q1450 650 1446 680L1440 706L1470 686Q1470 700 1440 726L1460 768"/>
    </g>
  </svg>

  <article class="bubble sent position-relative align-self-end flowing size-a">
    <p class="words">Está bien, con gusto. Qué han dicho los clientes del producto?
      <span class="stamp float-end d-flex align-items-center"><time datetime="13:13">1:13&#8202;p.m.</time><svg role="img" aria-label="Leído"><use href="#ticks"/></svg></span></p>
    <svg class="tail position-absolute" aria-hidden="true"><use href="#tail"/></svg>
  </article>

  <article class="bubble received position-relative align-self-start has-quote size-b">
    <blockquote class="quoted mine">
      <div class="who d-flex align-items-center gap-2">Me <svg class="heart" role="img" aria-label="corazón"><use href="#heart"/></svg></div>
      <p class="excerpt">Está bien, con gusto. Qué han dicho los clientes del producto?</p>
    </blockquote>
    <div class="d-flex justify-content-between align-items-end">
      <p class="words">Si ha gustado mucho</p>
      <div class="stamp"><time datetime="13:13">1:13&#8202;p.m.</time></div>
    </div>
    <svg class="tail position-absolute" aria-hidden="true"><use href="#tail"/></svg>
  </article>

  <article class="bubble sent position-relative align-self-end stacked size-c">
    <p class="words">Qué bueno, me alegro mucho</p>
    <div class="stamp d-flex align-items-center justify-content-end"><time datetime="13:13">1:13&#8202;p.m.</time><svg role="img" aria-label="Leído"><use href="#ticks"/></svg></div>
    <svg class="tail position-absolute" aria-hidden="true"><use href="#tail"/></svg>
  </article>

  <article class="bubble received position-relative align-self-start flowing size-d">
    <p class="words">Yo doy testimonio del producto
      <span class="stamp float-end"><time datetime="13:14">1:14&#8202;p.m.</time></span></p>
    <svg class="tail position-absolute" aria-hidden="true"><use href="#tail"/></svg>
  </article>

  <div class="close-set d-flex flex-column align-items-end">
    <article class="bubble sent has-quote stacked size-e">
      <blockquote class="quoted theirs">
        <div class="who text-truncate">Sandra Valencia Castilla Colaboradora</div>
        <p class="excerpt">Yo doy testimonio del producto</p>
      </blockquote>
      <p class="words">Claro con tus uñidas</p>
      <div class="stamp d-flex align-items-center justify-content-end"><time datetime="13:14">1:14&#8202;p.m.</time><svg role="img" aria-label="Leído"><use href="#ticks"/></svg></div>
    </article>
    <article class="bubble sent position-relative d-flex justify-content-between align-items-end size-f">
      <p class="words">Lindas</p>
      <div class="stamp d-flex align-items-center"><time datetime="13:14">1:14&#8202;p.m.</time><svg role="img" aria-label="Leído"><use href="#ticks"/></svg></div>
      <svg class="tail position-absolute" aria-hidden="true"><use href="#tail"/></svg>
    </article>
  </div>

  <article class="bubble received position-relative align-self-start d-flex justify-content-between align-items-end size-g">
    <p class="words d-flex align-items-center">Si<svg class="party" role="img" aria-label="cara de fiesta"><use href="#party"/></svg></p>
    <div class="stamp"><time datetime="13:15">1:15&#8202;p.m.</time></div>
    <svg class="tail position-absolute" aria-hidden="true"><use href="#tail"/></svg>
    <button type="button" class="reaction position-absolute d-flex align-items-center justify-content-center" aria-label="Reacción: corazón"><svg class="heart" aria-hidden="true"><use href="#heart"/></svg></button>
  </article>
</main>
</body>
</html>
